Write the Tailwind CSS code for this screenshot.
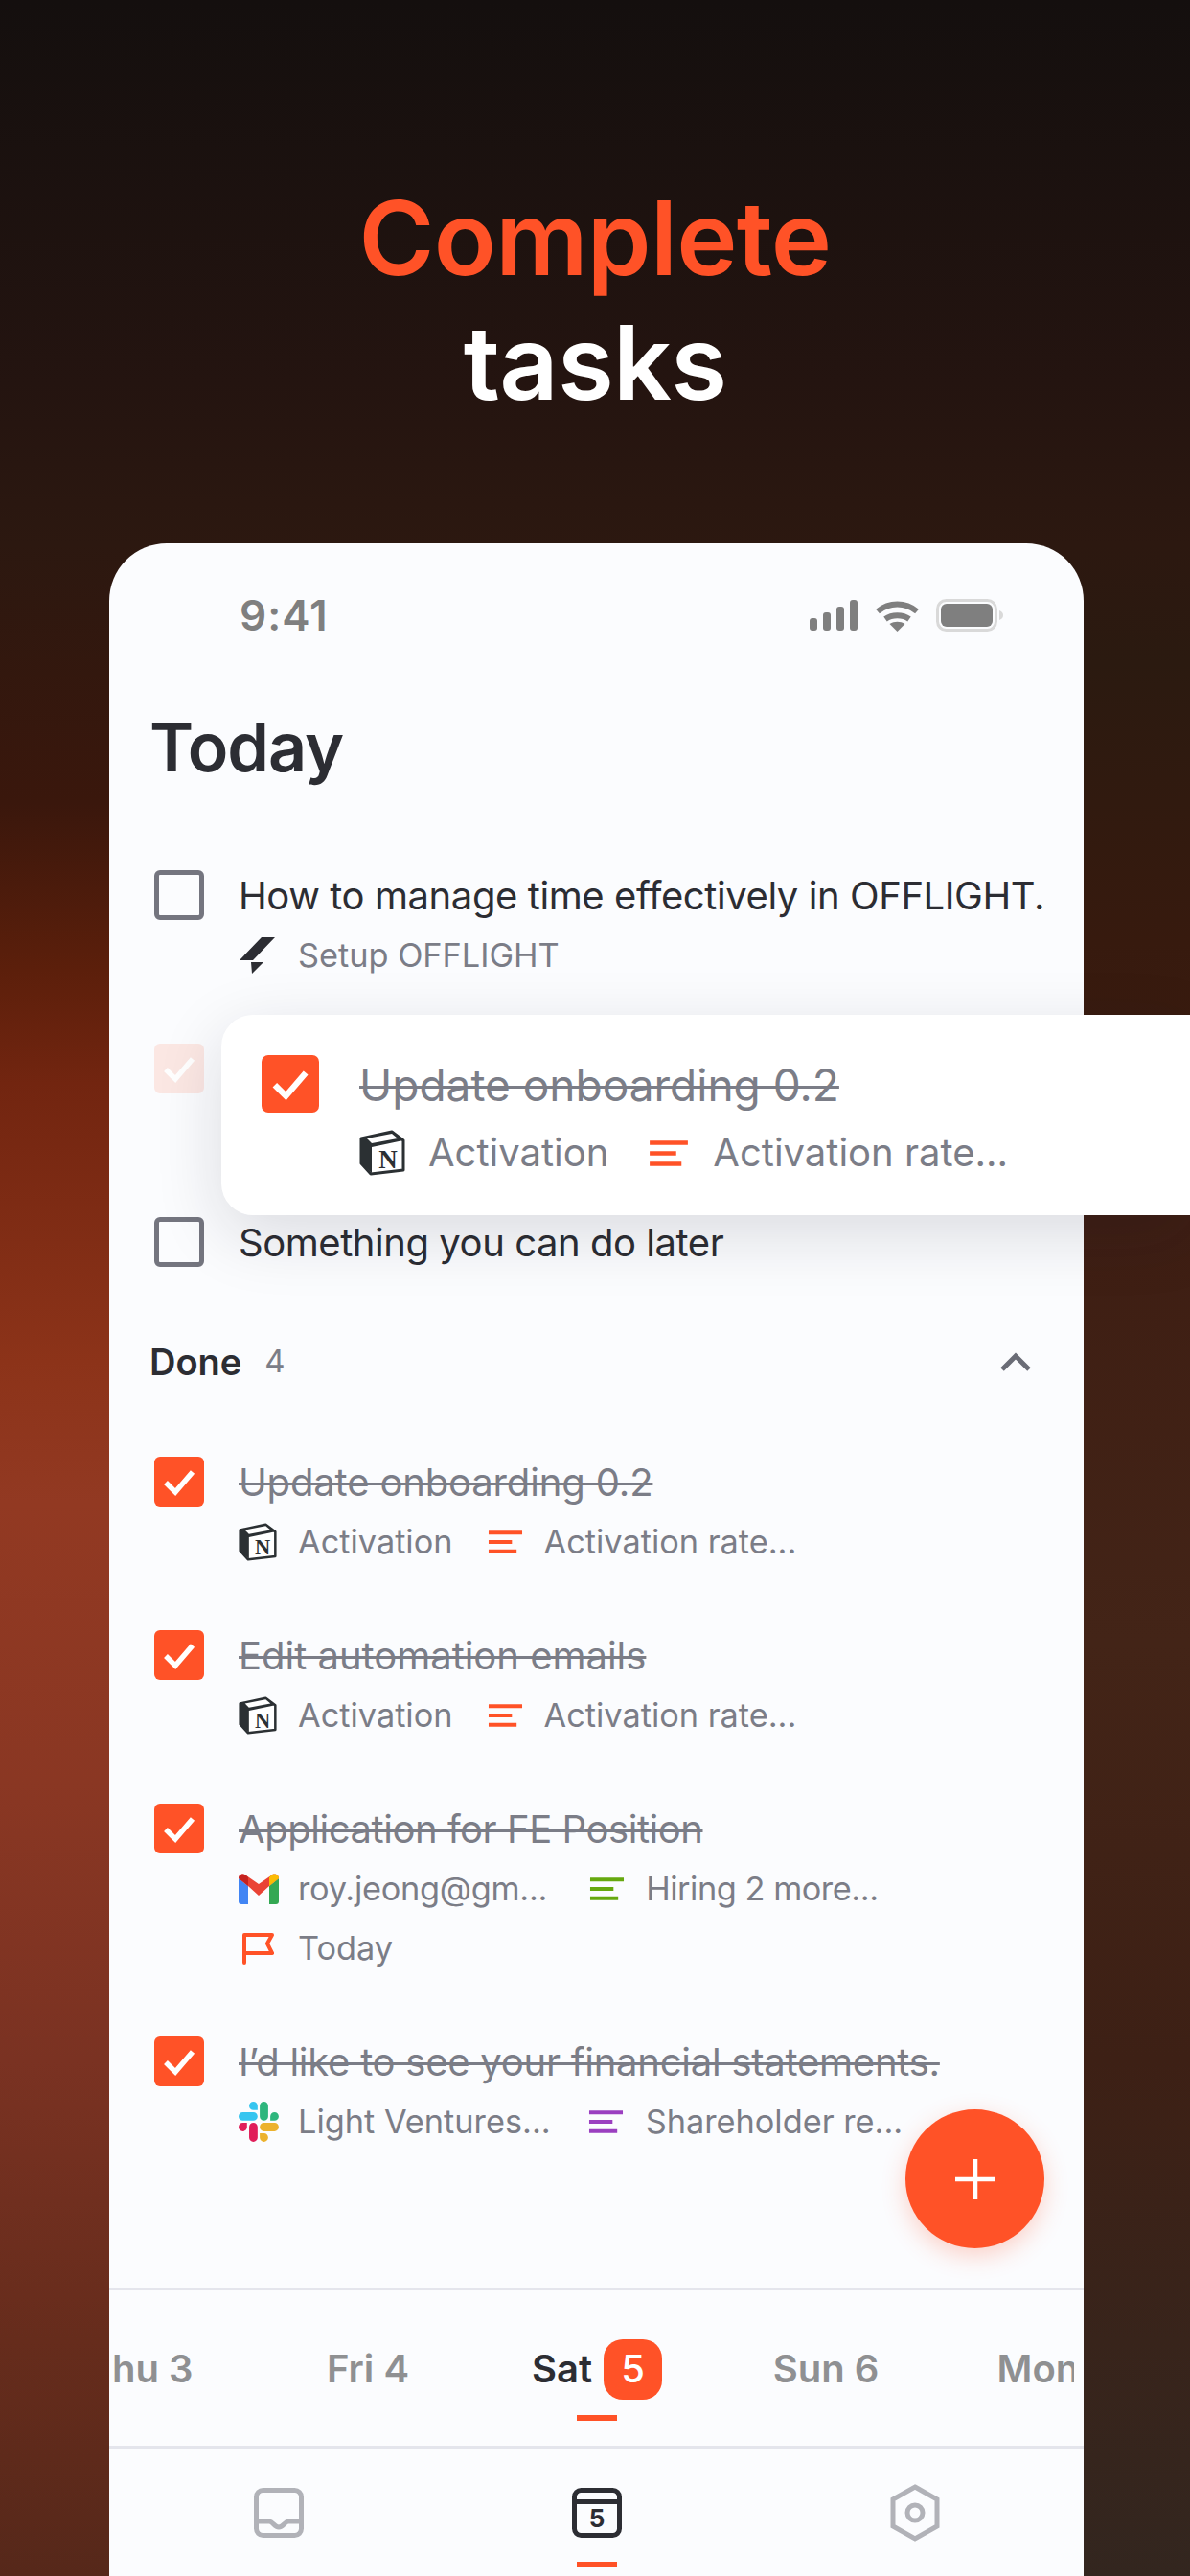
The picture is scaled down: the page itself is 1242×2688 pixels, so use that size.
<!DOCTYPE html>
<html lang="en">

<head>
  <meta charset="UTF-8">
  <meta name="viewport" content="width=device-width, initial-scale=1.0">
  <script src="https://cdn.jsdelivr.net/npm/@tailwindcss/browser@4"></script>
  <title>Complete tasks</title>
</head>

<body class="font-['Inter',sans-serif]">
  <!-- shared icons -->
  <svg class="hidden">
    <symbol id="check" viewBox="0 0 52 52"><path d="M12 27l10 10 18-21" fill="none" stroke="#fff" stroke-width="5.500" /></symbol>
    <symbol id="bars" viewBox="0 0 38 26"><path d="M1 3h36M1 13h25M1 23h30" fill="none" stroke="currentColor" stroke-width="4" /></symbol>
    <symbol id="notion" viewBox="0 0 48 48">
      <path d="M2 9 34 2l12 9v31l-34 4-10-11z" fill="#fff" stroke="#2b3033" stroke-width="3" stroke-linejoin="round" />
      <path d="M2 9l11 9 33-7-12-9zM2 9l11 9v27L2 35z" fill="#2b3033" />
      <path d="M8 9l26-5 6 5-27 5z" fill="#fff" />
      <text x="30" y="40" text-anchor="middle" font-family="Liberation Serif" font-weight="700" font-size="27" fill="#2b3033">N</text>
    </symbol>
  </svg>

  <div class="relative w-[1242px] h-[2688px] overflow-hidden flex flex-col [background:linear-gradient(180deg,#140f0e_0,#241410_400px,#2c1810_567px,#3a170c_838px,#5c1f0b_1013px,#722510_1130px,#8c3319_1420px,#923922_1567px,#8a3723_1860px,#7a3222_2150px,#662c1c_2443px,#56281a_2688px)_left/621px_100%_no-repeat,linear-gradient(180deg,#140f0e_0,#241410_400px,#2c1810_567px,#2b1a10_692px,#371a0e_984px,#3e1e13_1275px,#432417_1713px,#3d2015_2150px,#38241b_2443px,#33261f_2688px)_right/621px_100%_no-repeat]">
    <header class="h-[567px] shrink-0 pt-[183px] text-center text-[107px] leading-[130px] font-semibold tracking-[-0.7px]">
      <div class="text-[#ff5227]">Complete</div>
      <div class="text-white">tasks</div>
    </header>

    <main class="ml-[114px] w-[1017px] flex-1 min-h-0 flex flex-col bg-[#fbfcfe] rounded-t-[60px] text-[#2c2d33]">
      <div class="h-[150px] shrink-0 flex items-center justify-between pl-[136px] pr-[84px]">
        <span class="text-[44px] font-semibold text-[#7f7f7f] tracking-[1px]">9:41</span>
        <div class="flex items-center">
          <svg width="50" height="33" viewBox="0 0 50 33" fill="#7f7f7f">
            <rect x="0" y="19" width="8" height="13" rx="3" />
            <rect x="14" y="13" width="8" height="19" rx="3" />
            <rect x="28" y="7" width="8" height="25" rx="3" />
            <rect x="42" y="0" width="8" height="32" rx="3" />
          </svg>
          <svg class="ml-[19px]" width="45" height="33" viewBox="0 0 45 33" fill="none" stroke="#7f7f7f" stroke-width="6">
            <path d="M2 12c12-10 29-10 41 0M10 20c7-5 18-5 25 0" />
            <path d="M22.500 33l-8-8c5-3 11-3 16 0z" fill="#7f7f7f" stroke="none" />
          </svg>
          <svg class="ml-[18px]" width="70" height="34" viewBox="0 0 70 34">
            <rect x="1.500" y="1.500" width="61" height="31" rx="9" fill="none" stroke="#d9d9d9" stroke-width="3" />
            <rect x="5" y="5" width="54" height="24" rx="6" fill="#7f7f7f" />
            <path d="M66 12c3 1 4 3 4 5s-1 4-4 5z" fill="#d9d9d9" />
          </svg>
        </div>
      </div>

      <h1 class="h-[124px] shrink-0 pl-[42px] flex items-center text-[70px] font-semibold tracking-[-1px]">Today</h1>

      <div class="mt-[63px] pl-[47px]">
        <!-- open tasks -->
        <div class="flex gap-[36px] h-[181px]">
          <div class="mt-[4px] size-[52px] shrink-0 rounded-[6px] border-[5px] border-[#74757f]"></div>
          <div>
            <p class="h-[62px] leading-[62px] text-[40px] whitespace-nowrap tracking-[-0.42px]">How to manage time effectively in OFFLIGHT.</p>
            <div class="h-[62px] flex items-center text-[34.300px] text-[#7b7d87]">
              <svg class="ml-[-9px] mr-[11px]" width="60" height="55" viewBox="0 0 60 55" fill="#2c2d33"><path d="M33 8h14L24 32H10zM22 34h13L23 46z" /></svg>
              Setup OFFLIGHT
            </div>
          </div>
        </div>

        <div class="h-[181px] pt-[4px]">
          <div class="size-[52px] rounded-[6px] bg-[#fbe7e3]">
            <svg class="size-[52px]"><use href="#check" /></svg>
          </div>
        </div>

        <div class="flex gap-[36px] h-[124px]">
          <div class="mt-[4px] size-[52px] shrink-0 rounded-[6px] border-[5px] border-[#74757f]"></div>
          <p class="h-[62px] leading-[62px] text-[40px] tracking-[-0.45px]">Something you can do later</p>
        </div>
      </div>

      <!-- done -->
      <div class="h-[62px] shrink-0 pl-[42px] pr-[54px] flex items-center">
        <span class="text-[38px] font-semibold">Done</span>
        <span class="ml-[24px] text-[33px] text-[#7b7d87]">4</span>
        <svg class="ml-auto" width="34" height="20" viewBox="0 0 34 20" fill="none" stroke="#6a6c76" stroke-width="5"><path d="M3 18 17 4l14 14" /></svg>
      </div>

      <div class="mt-[64px] pl-[47px] text-[34.300px] text-[#7b7d87]">
        <div class="flex gap-[36px] h-[181px]">
          <div class="mt-[4px] size-[52px] shrink-0 rounded-[6px] bg-[#ff5227]"><svg class="size-[52px]"><use href="#check" /></svg></div>
          <div>
            <p class="h-[62px] leading-[62px] text-[40px] tracking-[-0.15px] line-through decoration-[3px]">Update onboarding 0.2</p>
            <div class="h-[62px] flex items-center whitespace-nowrap">
              <svg class="size-[40px] mr-[22px]"><use href="#notion" /></svg>Activation
              <svg class="ml-[36px] mr-[22px] w-[37px] h-[26px] text-[#ff5227]"><use href="#bars" /></svg>Activation rate...
            </div>
          </div>
        </div>

        <div class="flex gap-[36px] h-[181px]">
          <div class="mt-[4px] size-[52px] shrink-0 rounded-[6px] bg-[#ff5227]"><svg class="size-[52px]"><use href="#check" /></svg></div>
          <div>
            <p class="h-[62px] leading-[62px] text-[40px] tracking-[-0.02px] line-through decoration-[3px]">Edit automation emails</p>
            <div class="h-[62px] flex items-center whitespace-nowrap">
              <svg class="size-[40px] mr-[22px]"><use href="#notion" /></svg>Activation
              <svg class="ml-[36px] mr-[22px] w-[37px] h-[26px] text-[#ff5227]"><use href="#bars" /></svg>Activation rate...
            </div>
          </div>
        </div>

        <div class="flex gap-[36px] h-[243px]">
          <div class="mt-[4px] size-[52px] shrink-0 rounded-[6px] bg-[#ff5227]"><svg class="size-[52px]"><use href="#check" /></svg></div>
          <div>
            <p class="h-[62px] leading-[62px] text-[40px] tracking-[-0.45px] line-through decoration-[3px]">Application for FE Position</p>
            <div class="h-[62px] flex items-center whitespace-nowrap">
              <svg class="mr-[20px]" width="42" height="32" viewBox="0 0 42 32">
                <path d="M0 5v24a3 3 0 0 0 3 3h7V13z" fill="#4285f4" />
                <path d="M32 32h7a3 3 0 0 0 3-3V5L32 13z" fill="#34a853" />
                <path d="M0 5c0-4 5-6 8-3l13 9 13-9c3-3 8-1 8 3L32 13l-11 10-11-10z" fill="#ea4335" />
                <path d="M0 5c0-4 5-6 8-3l2 2v9z" fill="#c5221f" />
                <path d="M42 5c0-4-5-6-8-3l-2 2v9z" fill="#fbbc04" />
              </svg><span class="tracking-[-0.25px]">roy.jeong@gm...</span>
              <svg class="ml-[44px] mr-[22px] w-[37px] h-[26px] text-[#66a80f]"><use href="#bars" /></svg><span class="tracking-[-0.45px]">Hiring 2 more...</span>
            </div>
            <div class="h-[62px] flex items-center">
              <svg class="ml-[4px] mr-[24px]" width="34" height="34" viewBox="0 0 34 34" fill="none" stroke="#ff5227" stroke-width="4" stroke-linejoin="round" stroke-linecap="round"><path d="M2 32V3h29l-5 9 5 10H2" /></svg>Today
            </div>
          </div>
        </div>

        <div class="flex gap-[36px]">
          <div class="mt-[4px] size-[52px] shrink-0 rounded-[6px] bg-[#ff5227]"><svg class="size-[52px]"><use href="#check" /></svg></div>
          <div>
            <p class="h-[62px] leading-[62px] text-[40px] tracking-[-0.25px] line-through decoration-[3px] whitespace-nowrap">I’d like to see your financial statements.</p>
            <div class="h-[62px] flex items-center whitespace-nowrap">
              <svg class="mr-[20px]" width="42" height="42" viewBox="0 0 123 123">
                <path d="M25.800 77.600c0 7.100-5.800 12.900-12.900 12.900S0 84.700 0 77.600s5.800-12.900 12.900-12.900h12.900v12.900zM32.300 77.600c0-7.100 5.800-12.900 12.900-12.900s12.900 5.800 12.900 12.900v32.300c0 7.100-5.800 12.900-12.900 12.900s-12.900-5.800-12.900-12.900V77.600z" fill="#e01e5a" />
                <path d="M45.200 25.800c-7.100 0-12.900-5.800-12.900-12.900S38.100 0 45.200 0s12.900 5.800 12.900 12.900v12.900H45.200zM45.200 32.300c7.100 0 12.900 5.800 12.900 12.900s-5.800 12.900-12.900 12.900H12.900C5.800 58.100 0 52.300 0 45.200s5.800-12.900 12.900-12.900h32.300z" fill="#36c5f0" />
                <path d="M97 45.200c0-7.100 5.800-12.900 12.900-12.900s12.900 5.800 12.900 12.900-5.800 12.900-12.900 12.900H97V45.200zM90.500 45.200c0 7.100-5.800 12.900-12.900 12.900s-12.900-5.800-12.900-12.900V12.900C64.700 5.800 70.500 0 77.600 0s12.900 5.800 12.900 12.900v32.300z" fill="#2eb67d" />
                <path d="M77.600 97c7.100 0 12.900 5.800 12.900 12.900s-5.800 12.900-12.900 12.900-12.900-5.800-12.900-12.900V97h12.900zM77.600 90.500c-7.100 0-12.900-5.800-12.900-12.900s5.800-12.900 12.900-12.900h32.300c7.100 0 12.900 5.800 12.900 12.900s-5.800 12.900-12.900 12.900H77.600z" fill="#ecb22e" />
              </svg>Light Ventures...
              <svg class="ml-[39px] mr-[23px] w-[37px] h-[26px] text-[#9b3fc0]"><use href="#bars" /></svg>Shareholder re...
            </div>
          </div>
        </div>
      </div>

      <!-- date tabs + bottom nav -->
      <div class="mt-auto shrink-0">
        <div class="border-t-[3px] border-[#e4e5ec] pt-[50px] pb-[26px]">
          <div class="ml-[4px] mr-[10px] overflow-hidden">
            <div class="ml-[-91px] flex h-[64px] text-[40px] font-semibold text-[#8f9092] whitespace-nowrap">
              <div class="w-[238px] shrink-0 flex items-center justify-center">Thu 3</div>
              <div class="w-[238px] shrink-0 flex items-center justify-center">Fri 4</div>
              <div class="w-[240px] shrink-0 flex items-center justify-center text-[#2c2d33]">
                Sat
                <span class="ml-[12px] w-[61px] h-[63px] rounded-[20px] bg-[#ff5227] text-white font-medium flex items-center justify-center">5</span>
              </div>
              <div class="w-[238px] shrink-0 flex items-center justify-center">Sun 6</div>
              <div class="w-[238px] shrink-0 flex items-center justify-center">Mon 7</div>
            </div>
          </div>
          <div class="mx-auto mt-[16px] w-[42px] h-[6px] bg-[#ff5227]"></div>
        </div>

        <nav class="h-[136px] border-t-[3px] border-[#e4e5ec] pt-[41px] flex justify-center">
          <div class="w-[332px] flex flex-col items-center">
            <svg width="52" height="52" viewBox="0 0 52 52" fill="none" stroke="#b1b2b8" stroke-width="5">
              <rect x="2.500" y="2.500" width="47" height="47" rx="7" />
              <path d="M3 35h13c4 0 5 6 10 6s6-6 10-6h13" />
            </svg>
          </div>
          <div class="w-[332px] flex flex-col items-center">
            <svg width="52" height="52" viewBox="0 0 52 52">
              <rect x="2.500" y="2.500" width="47" height="47" rx="7" fill="none" stroke="#2c2d33" stroke-width="5" />
              <rect x="2" y="12" width="48" height="5" fill="#2c2d33" />
              <text x="26" y="41" text-anchor="middle" font-family="Inter" font-weight="700" font-size="26" fill="#2c2d33">5</text>
            </svg>
            <div class="mt-[25px] w-[42px] h-[6px] bg-[#ff5227]"></div>
          </div>
          <div class="w-[332px] flex flex-col items-center">
            <svg class="mt-[-4px]" width="52" height="60" viewBox="0 0 52 60" fill="none" stroke="#b1b2b8" stroke-width="5">
              <path d="M26 3 49 16v28L26 57 3 44V16z" />
              <circle cx="26" cy="30" r="8" />
            </svg>
          </div>
        </nav>
      </div>
    </main>

    <!-- dragged task, sits above the list -->
    <div class="absolute left-[231px] right-0 top-[1059px] h-[209px] bg-white rounded-l-[33px] shadow-[0_20px_70px_rgba(20,20,40,0.14)] flex pl-[42px] pt-[42px] gap-[42px] text-[#7b7d87]">
      <div class="size-[60px] shrink-0 rounded-[7px] bg-[#ff5227]"><svg class="size-[60px]"><use href="#check" /></svg></div>
      <div>
        <p class="h-[62px] leading-[62px] text-[46px] line-through decoration-[3px]">Update onboarding 0.2</p>
        <div class="mt-[9px] flex items-center h-[62px] text-[40px] whitespace-nowrap">
          <svg class="size-[48px] mr-[24px]"><use href="#notion" /></svg>Activation
          <svg class="ml-[42px] mr-[25px] w-[42px] h-[29px] text-[#ff5227]"><use href="#bars" /></svg>Activation rate...
        </div>
      </div>
    </div>

    <button class="absolute left-[945px] top-[2201px] size-[145px] rounded-full bg-[#ff5227] shadow-[0_8px_24px_rgba(255,82,39,0.25)] flex items-center justify-center">
      <svg width="44" height="44" viewBox="0 0 44 44" stroke="#fff" stroke-width="4.500"><path d="M22 1v42M1 22h42" /></svg>
    </button>
  </div>
</body>

</html>
